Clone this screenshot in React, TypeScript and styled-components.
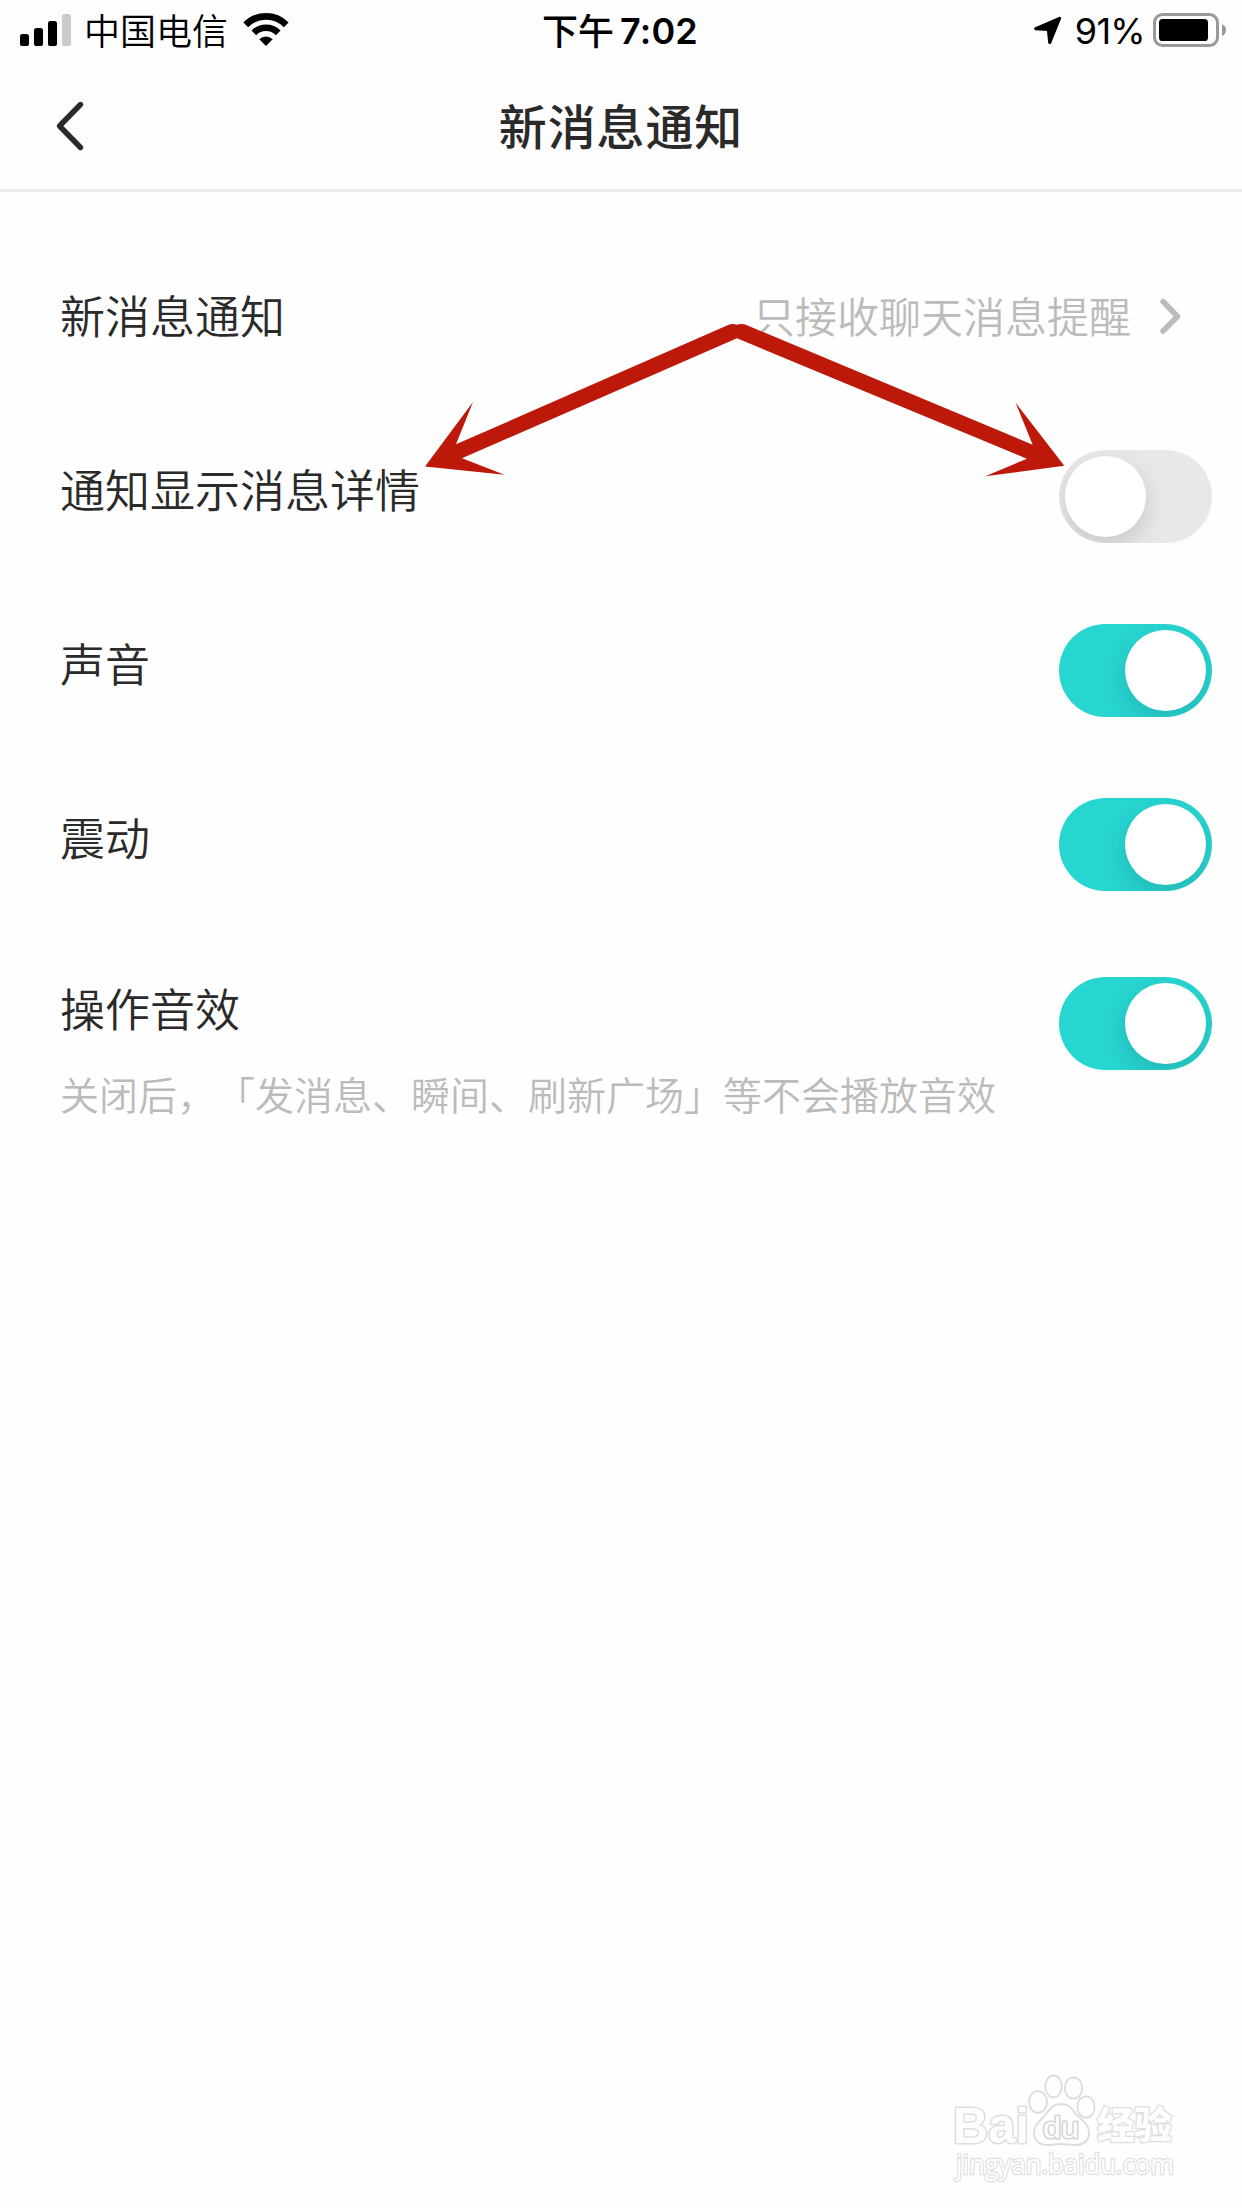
import React, { useState } from "react";
import styled, { createGlobalStyle } from "styled-components";

const GlobalStyle = createGlobalStyle`
  *, *::before, *::after { box-sizing: border-box; }
  body {
    margin: 0;
    background: #fefefe;
    font-family: "Liberation Sans", "Noto Sans CJK SC", sans-serif;
    color: #2a2a2a;
    text-spacing-trim: space-all;
  }
`;

const Screen = styled.div`
  position: relative;
  width: 1242px;
  height: 2208px;
  overflow: hidden;
  background: #fefefe;
  display: flex;
  flex-direction: column;
`;

const Header = styled.header`
  height: 192px;
  flex: none;
  background: #fdfdfd;
  border-bottom: 3px solid #ebebeb;
`;

const StatusBar = styled.div`
  height: 60px;
  display: grid;
  grid-template-columns: 1fr auto 1fr;
  align-items: center;
  padding: 0 16px 0 20px;
  font-family: Inter, "Noto Sans CJK SC", sans-serif;
  font-size: 36px;
  line-height: 60px;
  color: #000;
`;

const StatusGroup = styled.div<{ $end?: boolean }>`
  display: flex;
  align-items: center;
  justify-content: ${(p) => (p.$end ? "flex-end" : "flex-start")};
  height: 60px;

  svg { display: block; flex: none; }
`;

const Carrier = styled.span`
  margin: 0 15px 0 12px;
  font-family: "Noto Sans CJK SC", sans-serif;
  font-weight: 350;
  height: 60px;
  line-height: 58px;
`;

const Clock = styled.div`
  display: flex;
  gap: 6px;
  height: 60px;
  padding: 1px 6px 0 0;
  font-weight: 600;
  letter-spacing: 0.2px;
`;

const Meridiem = styled.span`
  font-family: "Noto Sans CJK SC", sans-serif;
  font-weight: 500;
  line-height: 57px;
  letter-spacing: 0;
`;

const Percent = styled.span`
  margin: 0 8px 0 13px;
  height: 60px;
  padding-top: 1px;
  letter-spacing: -0.7px;
`;

const NavBar = styled.nav`
  height: 129px;
  display: grid;
  grid-template-columns: 120px 1fr 120px;
  align-items: center;
`;

const BackButton = styled.button`
  border: 0;
  background: none;
  height: 129px;
  padding: 3px 0 0 54px;
  display: flex;
  align-items: center;
`;

const Title = styled.h1`
  margin: 0;
  padding-bottom: 2px;
  text-align: center;
  font-family: "Noto Sans CJK SC", sans-serif;
  font-size: 48px;
  line-height: 72px;
  letter-spacing: 0.9px;
  font-weight: 500;
`;

const List = styled.main`
  display: flex;
  flex-direction: column;
  padding: 37px 30px 0 60px;
`;

const Row = styled.div`
  height: 174px;
  display: flex;
  align-items: center;
  justify-content: space-between;
`;

const Label = styled.div`
  padding-bottom: 3px;
  font-family: "Noto Sans CJK SC", sans-serif;
  font-size: 45px;
  font-weight: 350;
  line-height: 66px;
`;

const Hint = styled.div`
  margin-top: 20px;
  font-family: "Noto Sans CJK SC", sans-serif;
  font-size: 39px;
  font-weight: 350;
  line-height: 58px;
  color: #bbb;
  white-space: nowrap;
`;

const HintedRow = styled.div`
  display: flex;
  justify-content: space-between;
  align-items: flex-start;
  padding-top: 50px;
`;

const Value = styled.div`
  display: flex;
  align-items: center;
  gap: 27px;
  padding-right: 30px;
  font-family: "Noto Sans CJK SC", sans-serif;
  font-size: 42px;
  font-weight: 350;
  line-height: 62px;
  color: #bbb;

  span { padding-bottom: 3px; }
  svg { display: block; }
`;

const Track = styled.button<{ $on: boolean; $offset: number }>`
  flex: none;
  width: 153px;
  height: 93px;
  padding: 6px;
  margin-top: ${(p) => p.$offset}px;
  border: 0;
  border-radius: 47px;
  overflow: hidden;
  display: flex;
  justify-content: ${(p) => (p.$on ? "flex-end" : "flex-start")};
  background: ${(p) => (p.$on ? "#27d5d1" : "#e8e8ea")};
`;

const Knob = styled.span`
  width: 81px;
  height: 81px;
  border-radius: 50%;
  background: #fff;
  box-shadow: 0 9px 24px rgba(0, 0, 0, 0.14);
`;

const Arrows = styled.svg`
  position: absolute;
  left: 420px;
  top: 315px;
  pointer-events: none;
`;

const Watermark = styled.svg`
  position: absolute;
  left: 930px;
  top: 2050px;
`;

function Toggle({ initial, offset = 13 }: { initial: boolean; offset?: number }) {
  const [on, setOn] = useState(initial);
  return (
    <Track $on={on} $offset={offset} role="switch" aria-checked={on} onClick={() => setOn(!on)}>
      <Knob />
    </Track>
  );
}

const switches = [
  { label: "通知显示消息详情", on: false },
  { label: "声音", on: true },
  { label: "震动", on: true },
];

export default function App() {
  return (
    <Screen>
      <GlobalStyle />
      <Header>
        <StatusBar>
          <StatusGroup>
            <svg width="52" height="60">
              <rect x="0" y="34" width="9" height="12" rx="2.6" />
              <rect x="14" y="28" width="9" height="18" rx="2.6" />
              <rect x="28" y="21" width="9" height="25" rx="2.6" />
              <rect x="42" y="14" width="9" height="32" rx="2.6" fill="#cbcbcb" />
            </svg>
            <Carrier>中国电信</Carrier>
            <svg width="46" height="60" viewBox="0 0 46 60">
              <path d="M2.8 24.8a28.5 28.5 0 0 1 40.4 0" fill="none" stroke="#000" strokeWidth="6.8" />
              <path d="M10.8 32.8a17.3 17.3 0 0 1 24.4 0" fill="none" stroke="#000" strokeWidth="6.6" />
              <path d="M23 46l-6.7-6.8a9.5 9.5 0 0 1 13.4 0z" />
            </svg>
          </StatusGroup>
          <Clock>
            <Meridiem>下午</Meridiem>
            <span>7:02</span>
          </Clock>
          <StatusGroup $end>
            <svg width="28" height="60" viewBox="0 0 28 60">
              <path
                d="M25.700 18.300L1.700 28.700L14.300 29.400L15.700 42.600Z"
                stroke="#000"
                strokeWidth="3"
                strokeLinejoin="round"
              />
            </svg>
            <Percent>91%</Percent>
            <svg width="73" height="60" viewBox="0 0 73 60">
              <rect x="5.500" y="14.500" width="63" height="31" rx="8" fill="none" stroke="#999" strokeWidth="3" transform="translate(-4 0)" />
              <rect x="6" y="19" width="49" height="22" rx="3.600" />
              <path d="M69 24q4 2 4 6t-4 6z" fill="#999" />
            </svg>
          </StatusGroup>
        </StatusBar>
        <NavBar>
          <BackButton aria-label="返回">
            <svg width="32" height="52" viewBox="0 0 32 52">
              <path
                d="M26.500 4.500L5.500 26l21 21.500"
                fill="none"
                stroke="#2a2a2a"
                strokeWidth="5.400"
                strokeLinecap="round"
                strokeLinejoin="round"
              />
            </svg>
          </BackButton>
          <Title>新消息通知</Title>
        </NavBar>
      </Header>

      <List>
        <Row>
          <Label>新消息通知</Label>
          <Value>
            <span>只接收聊天消息提醒</span>
            <svg width="24" height="38" viewBox="0 0 24 38">
              <path
                d="M5 4.500L19.500 19.500L5 34"
                fill="none"
                stroke="#bbb"
                strokeWidth="5.500"
                strokeLinecap="round"
                strokeLinejoin="round"
              />
            </svg>
          </Value>
        </Row>
        {switches.map((s) => (
          <Row key={s.label}>
            <Label>{s.label}</Label>
            <Toggle initial={s.on} />
          </Row>
        ))}
        <HintedRow>
          <div>
            <Label>操作音效</Label>
            <Hint>关闭后，「发消息、瞬间、刷新广场」等不会播放音效</Hint>
          </div>
          <Toggle initial offset={2} />
        </HintedRow>
      </List>

      <Arrows width="660" height="175" viewBox="420 315 660 175">
        <path
          d="M425 466.500L473 402L456 444.300L727 325.500Q732 323.200 737 324.700Q742 323.200 747 325.300L1032.700 444.700L1015.500 402.500L1064.300 465.700L985.300 476.300L1027 458.700L737 338.300L462 458.300L504.500 474.700Z"
          fill="#bc190a"
        />
      </Arrows>

      <Watermark width="270" height="150" viewBox="0 0 270 150">
        <g fill="#fefefe" stroke="#dcdcdc" strokeWidth="1.800">
          <ellipse cx="108" cy="52" rx="9" ry="11" />
          <ellipse cx="123.500" cy="36.500" rx="8.300" ry="11" />
          <ellipse cx="143.500" cy="38" rx="8.700" ry="10.700" />
          <ellipse cx="156" cy="57" rx="8.700" ry="10.700" />
          <path d="M131 54c8 0 11 5 15 10c5 6 13 9 13 19c0 8-6 12-13 12c-6 0-10-1-15-1s-8 1-13 1c-8 0-14-4-14-12c0-9 7-12 12-19c4-5 7-10 15-10z" />
        </g>
        <g fill="#fefefe" stroke="#dedede" strokeLinejoin="round" paintOrder="stroke">
          <text x="23" y="93" fontFamily="Liberation Sans" fontWeight="700" fontSize="50" strokeWidth="3" textLength="76" lengthAdjust="spacingAndGlyphs">Bai</text>
          <text x="113" y="88" fontFamily="Liberation Sans" fontWeight="400" fontSize="29" strokeWidth="3" stroke="#d4d4d4" textLength="36" lengthAdjust="spacingAndGlyphs">du</text>
          <text x="167" y="89" fontFamily="Noto Sans CJK SC" fontWeight="900" fontSize="37" strokeWidth="2.500" textLength="75" lengthAdjust="spacingAndGlyphs">经验</text>
          <text x="26" y="124" fontFamily="Open Sans" fontSize="28" strokeWidth="2.500" textLength="218" lengthAdjust="spacingAndGlyphs">jingyan.baidu.com</text>
        </g>
      </Watermark>
    </Screen>
  );
}
